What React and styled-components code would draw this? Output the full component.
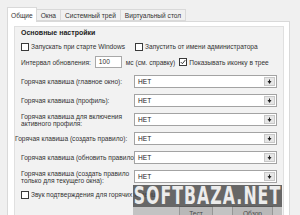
import React from "react";
import styled, { createGlobalStyle } from "styled-components";

const Global = createGlobalStyle`
  html, body { margin: 0; padding: 0; background: #f0f0f0; overflow: hidden; }
  body { font-family: "Liberation Sans", Arial, sans-serif; font-size: 6.6px; color: #333333; }
  #root { width: 300px; height: 215px; position: relative; overflow: hidden; }
`;

const Window = styled.div`
  padding: 7px 10px 0 7px;
`;

const TabBar = styled.div`
  display: flex;
  align-items: flex-end;
  height: 14px;
  position: relative;
  z-index: 1;
`;

const Tab = styled.div`
  box-sizing: border-box;
  height: ${(p) => (p.$active ? "15px" : "12px")};
  margin-bottom: ${(p) => (p.$active ? "-1px" : "0")};
  padding: 0 ${(p) => p.$pad || 4}px;
  display: flex;
  align-items: center;
  background: ${(p) => (p.$active ? "#ffffff" : "#f0f0f0")};
  border: 1px solid #d9d9d9;
  border-bottom: ${(p) => (p.$active ? "none" : "1px solid #d9d9d9")};
  margin-left: ${(p) => (p.$first ? "0" : "-1px")};
  white-space: nowrap;
`;

const Panel = styled.div`
  background: #ffffff;
  border: 1px solid #d9d9d9;
  height: 220px;
  padding: 4px 5px 0 6px;
  box-sizing: border-box;
`;

const Group = styled.div`
  background: #f2f2f2;
  border: 1px solid #e0e0e0;
  padding: 0 0 0 6px;
  height: 240px;
  box-sizing: border-box;
  display: flex;
  flex-direction: column;
`;

const Title = styled.div`
  font-weight: bold;
  font-size: 7px;
  height: 9px;
  line-height: 9px;
  margin-top: 1px;
  color: #222;
`;

const Row = styled.div`
  display: flex;
  align-items: center;
  height: ${(p) => p.$h || 9}px;
  margin-top: ${(p) => p.$mt || 0}px;
  white-space: nowrap;
`;

const CheckItem = styled.label`
  display: flex;
  align-items: center;
  gap: 2px;
  width: ${(p) => (p.$w ? p.$w + "px" : "auto")};
  margin-left: ${(p) => p.$ml || 0}px;
`;

const Box = styled.span`
  box-sizing: border-box;
  width: 8px;
  height: 8px;
  border: 1px solid #3a3a3a;
  background: #ffffff;
  display: inline-flex;
  align-items: center;
  justify-content: center;
  flex: none;
`;

const Input = styled.div`
  box-sizing: border-box;
  width: 27px;
  height: 12px;
  border: 1px solid #a8a8a8;
  background: #fff;
  padding-left: 3px;
  line-height: 10px;
  margin: 0 4px 0 ${(p) => p.$ml}px;
`;

const HotGrid = styled.div`
  display: grid;
  grid-template-columns: 113px 143px;
  grid-auto-rows: 13px;
  row-gap: 6px;
  margin-top: 7px;
  align-items: center;
`;

const Label = styled.div`
  line-height: 7px;
  margin-left: ${(p) => p.$shift || 0}px;
  white-space: ${(p) => (p.$wrap ? "normal" : "nowrap")};
  width: ${(p) => (p.$wrap ? "110px" : "auto")};
`;

const Combo = styled.div`
  box-sizing: border-box;
  height: 13px;
  border: 1px solid #a3a3a3;
  background: #fff;
  display: flex;
  align-items: stretch;
`;

const ComboText = styled.div`
  flex: 1;
  padding-left: 3px;
  line-height: 11px;
  color: #222;
`;

const ComboBtn = styled.div`
  width: 9px;
  margin: 1px;
  background: #e6e6e6;
  border: 1px solid #c8c8c8;
  display: flex;
  align-items: center;
  justify-content: center;
`;

const Buttons = styled.div`
  display: flex;
  justify-content: flex-end;
  gap: 19px;
  padding-right: 10px;
  margin-top: 7px;
`;

const Button = styled.div`
  box-sizing: border-box;
  width: ${(p) => p.$w}px;
  height: 14px;
  border: 1px solid #adadad;
  background: #e1e1e1;
  display: flex;
  align-items: center;
  justify-content: center;
`;

const Watermark = styled.div`
  position: absolute;
  left: 133px;
  top: 185px;
  width: 149px;
  height: 30px;
  display: flex;
  flex-direction: column;
`;

const MarkBand = styled.div`
  height: 22px;
  background: rgba(72, 72, 72, 0.82);
  display: flex;
  justify-content: center;
  overflow: hidden;
`;

const MarkText = styled.span`
  flex: none;
  display: inline-block;
  white-space: nowrap;
  color: #ececec;
  font-family: "DejaVu Sans Condensed", "Liberation Sans Narrow", sans-serif;
  font-weight: bold;
  font-size: 25px;
  line-height: 22px;
  letter-spacing: 1.5px;
  transform: scaleX(0.7);
  transform-origin: center;
`;

const MarkFade = styled.div`
  flex: 1;
  background: rgba(110, 110, 110, 0.35);
`;

const Check = () => (
  <svg width="6" height="6" viewBox="0 0 6 6">
    <path d="M0.8 3.1 L2.4 4.7 L5.3 1.1" fill="none" stroke="#333" strokeWidth="1" />
  </svg>
);

const Arrow = () => (
  <svg width="5" height="6" viewBox="0 0 5 6">
    <path d="M0.5 2 L4.5 2 L2.5 5 Z" fill="#222" />
    <rect x="2" y="0.5" width="1" height="2" fill="#222" />
  </svg>
);

const hotkeys = [
  { t: "Горячая клавиша (главное окно):" },
  { t: "Горячая клавиша (профиль):" },
  { t: "Горячая клавиша для включения активного профиля:", wrap: true },
  { t: "Горячая клавиша (создать правило):", shift: -6 },
  { t: "Горячая клавиша (обновить правило)" },
  { t: "Горячая клавиша (создать правило только для текущего окна):", wrap: true },
];

export default function App() {
  return (
    <>
      <Global />
      <Window>
        <TabBar>
          <Tab $active $first $pad={3}>Общие</Tab>
          <Tab $pad={4}>Окна</Tab>
          <Tab $pad={4}>Системный трей</Tab>
          <Tab $pad={4}>Виртуальный стол</Tab>
        </TabBar>
        <Panel>
          <Group>
            <Title>Основные настройки</Title>
            <Row $mt={5}>
              <CheckItem $w={114}>
                <Box />
                Запускать при старте Windows
              </CheckItem>
              <CheckItem>
                <Box />
                Запустить от имени администратора
              </CheckItem>
            </Row>
            <Row $mt={5} $h={12}>
              Интервал обновления:
              <Input $ml={4}>100</Input>
              мс (см. справку)
              <CheckItem $ml={4}>
                <Box>
                  <Check />
                </Box>
                Показывать иконку в трее
              </CheckItem>
            </Row>
            <HotGrid>
              {hotkeys.map((h, i) => (
                <React.Fragment key={i}>
                  <Label $wrap={h.wrap} $shift={h.shift}>
                    {h.t}
                  </Label>
                  <Combo>
                    <ComboText>НЕТ</ComboText>
                    <ComboBtn>
                      <Arrow />
                    </ComboBtn>
                  </Combo>
                </React.Fragment>
              ))}
            </HotGrid>
            <Row $mt={7}>
              <CheckItem>
                <Box />
                Звук подтверждения для горячих клавиш
              </CheckItem>
            </Row>
            <Buttons>
              <Button $w={34}>Тест</Button>
              <Button $w={41}>Обзор</Button>
            </Buttons>
          </Group>
        </Panel>
      </Window>
      <Watermark>
        <MarkBand>
          <MarkText>SOFTBAZA.NET</MarkText>
        </MarkBand>
        <MarkFade />
      </Watermark>
    </>
  );
}
